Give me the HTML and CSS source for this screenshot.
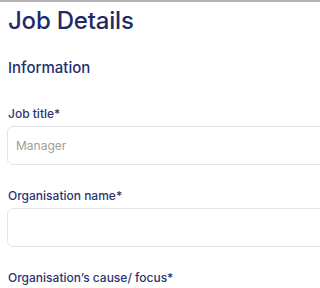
FILE: index.html
```html
<!DOCTYPE html>
<html>
<head>
<meta charset="utf-8">
<link rel="stylesheet" href="styles.css">
</head>
<body>
<div class="topbar"></div>
<main class="page">
  <h1 class="title">Job Details</h1>
  <h2 class="section">Information</h2>
  <div class="field">
    <label class="label">Job title*</label>
    <div class="input placeholder">Manager</div>
  </div>
  <div class="field">
    <label class="label">Organisation name*</label>
    <div class="input"></div>
  </div>
  <div class="field">
    <label class="label">Organisation’s cause/ focus*</label>
  </div>
</main>
</body>
</html>
```
FILE: styles.css
```css
html, body {
  margin: 0;
  padding: 0;
  background: #ffffff;
  overflow: hidden;
}
body {
  font-family: "Inter", "Liberation Sans", sans-serif;
  color: #1f2b66;
}
.topbar {
  height: 2px;
  background: #b3b3b3;
}
.page {
  padding: 0 0 0 8px;
  display: flex;
  flex-direction: column;
}
.title {
  margin: 5px 0 0 0;
  font-size: 24px;
  font-weight: 500;
  line-height: 28px;
  letter-spacing: -0.2px;
  color: #1f2b66;
}
.section {
  margin: 24px 0 0 0;
  font-size: 15px;
  font-weight: 500;
  line-height: 18px;
  color: #233070;
}
.field {
  display: flex;
  flex-direction: column;
}
.section + .field {
  margin-top: 29px;
}
.field + .field {
  margin-top: 23px;
}
.label {
  font-size: 12px;
  font-weight: 500;
  line-height: 16px;
  color: #2a3670;
}
.input {
  margin-top: 4px;
  margin-left: -1px;
  margin-right: -10px;
  height: 37px;
  border: 1px solid #e4e4e4;
  border-radius: 6px;
  display: flex;
  align-items: center;
  padding-left: 8px;
  font-size: 12px;
  color: #9d9d9d;
}
```
